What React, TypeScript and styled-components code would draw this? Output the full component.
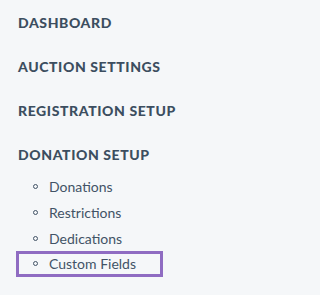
import React from 'react'
import styled, { createGlobalStyle } from 'styled-components'

const GlobalStyle = createGlobalStyle`
  html, body {
    margin: 0;
    padding: 0;
    background: #f5f7f9;
  }
  body {
    font-family: "Lato", "Liberation Sans", sans-serif;
    -webkit-font-smoothing: antialiased;
  }
`

const Nav = styled.nav`
  display: flex;
  flex-direction: column;
  padding: 13px 0 0 18px;
  width: 201px;
  height: 295px;
  box-sizing: border-box;
`

const Heading = styled.a`
  display: block;
  height: 44px;
  line-height: 20px;
  font-size: 14px;
  font-weight: 900;
  letter-spacing: 0.6px;
  color: #3c4e60;
  text-transform: uppercase;
  text-decoration: none;
`

const SubList = styled.ul`
  list-style: none;
  margin: -15px 0 0 -2px;
  padding: 0;
  display: flex;
  flex-direction: column;
`

const SubItem = styled.li<{ $active?: boolean }>`
  display: flex;
  align-items: center;
  gap: 11px;
  width: 147px;
  height: 25.7px;
  box-sizing: border-box;
  padding-left: 14px;
  font-size: 14px;
  color: #425366;
  border: 3px solid ${p => (p.$active ? '#8f6cc2' : 'transparent')};

  &::before {
    content: '';
    width: 3px;
    height: 3px;
    border: 1.5px solid #425366;
    border-radius: 50%;
    flex: none;
  }
`

const headings = ['Dashboard', 'Auction Settings', 'Registration Setup', 'Donation Setup']
const items = ['Donations', 'Restrictions', 'Dedications', 'Custom Fields']

export default function App() {
  return (
    <>
      <GlobalStyle />
      <Nav>
        {headings.map(h => (
          <Heading key={h}>{h}</Heading>
        ))}
        <SubList>
          {items.map(i => (
            <SubItem key={i} $active={i === 'Custom Fields'}>{i}</SubItem>
          ))}
        </SubList>
      </Nav>
    </>
  )
}
